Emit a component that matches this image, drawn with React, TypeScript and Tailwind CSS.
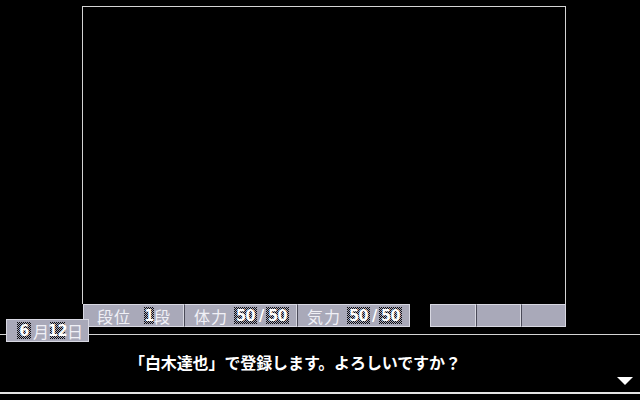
const digits = "font-['DejaVu_Sans_Condensed','Liberation_Sans_Narrow','Liberation_Sans',sans-serif]";

function Checker() {
  return (
    <svg className="absolute inset-0 h-full w-full" shapeRendering="crispEdges" aria-hidden>
      <defs>
        <pattern id="chk" width="2" height="2" patternUnits="userSpaceOnUse">
          <rect width="2" height="2" fill="#a9a9b9" />
          <rect width="1" height="1" fill="#0c0c10" />
          <rect x="1" y="1" width="1" height="1" fill="#0c0c10" />
        </pattern>
      </defs>
      <rect width="100%" height="100%" fill="url(#chk)" />
    </svg>
  );
}

function Num({ children, w }: { children: string; w: string }) {
  return (
    <span
      className={`${digits} ${w} relative inline-flex h-[17px] items-center justify-center text-[16px] font-bold leading-none tracking-[-0.5px] text-white`}
    >
      <Checker />
      <span className="relative">{children}</span>
    </span>
  );
}

function Cell({ w, children, dark }: { w: string; children?: React.ReactNode; dark?: boolean }) {
  return (
    <div
      className={`${w} flex h-full items-center border border-[#d8d8e2] bg-[#a9a9b9] text-[16px] leading-none text-[#f0f0f6] ${
        dark ? 'border-l-[#4a4a58]' : ''
      }`}
    >
      {children}
    </div>
  );
}

function Gauge() {
  return (
    <span className="ml-[6px] flex items-center">
      <Num w="w-[23px]">50</Num>
      <span className={`${digits} w-[9px] text-center text-[16px] font-bold text-white`}>/</span>
      <Num w="w-[23px]">50</Num>
    </span>
  );
}

export default function App() {
  const jp = "font-['Noto_Sans_CJK_JP','Noto_Sans',sans-serif]";
  return (
    <div className={`flex h-[400px] w-[640px] flex-col overflow-hidden bg-black ${jp}`}>
      {/* main view frame */}
      <div className="ml-[82px] mt-[6px] h-[298px] w-[484px] border border-b-0 border-[#d4d4d4]" />

      {/* status bar */}
      <div className="ml-[83px] flex h-[23px]">
        <Cell w="w-[101px]">
          <span className="ml-[13px] tracking-[1px]">段位</span>
          <span className="ml-[13px] flex items-center">
            <Num w="w-[10px]">1</Num>
            <span>段</span>
          </span>
        </Cell>
        <Cell w="w-[113px]" dark>
          <span className="ml-[9px] tracking-[1px]">体力</span>
          <Gauge />
        </Cell>
        <Cell w="w-[113px]" dark>
          <span className="ml-[9px] tracking-[1px]">気力</span>
          <Gauge />
        </Cell>
        <div className="w-[20px]" />
        <Cell w="w-[46px]" />
        <Cell w="w-[45px]" dark />
        <Cell w="w-[45px]" dark />
      </div>

      {/* date tab + separator line */}
      <div className="relative z-10 -mt-[8px] flex items-start">
        <div className="h-[16px] w-[6px] border-b border-[#d4d4d4]" />
        <div className="flex h-[23px] w-[83px] items-center border border-[#d8d8e2] bg-[#a9a9b9] text-[16px] leading-none text-[#f0f0f6]">
          <span className="ml-[10px] flex">
            <Num w="w-[14px]">6</Num>
          </span>
          <span className="ml-[2px]">月</span>
          <span className="ml-[1px] flex">
            <Num w="w-[15px]">12</Num>
          </span>
          <span className="ml-[2px]">日</span>
        </div>
        <div className="h-[16px] flex-1 border-b border-[#d4d4d4]" />
      </div>

      {/* message */}
      <div className="mt-[10px] pl-[129px] text-[16px] font-bold leading-[21px] tracking-[-0.1px] text-white">
        「白木達也」で登録します。よろしいですか？
      </div>

      <div className="flex h-[19px] justify-end pr-[7px] pt-[4px]">
        <svg width="16" height="8" viewBox="0 0 16 8">
          <polygon points="0,0 16,0 8,8" fill="#ffffff" />
        </svg>
      </div>

      <div className="h-[2px] w-full bg-[#e4e4e4]" />
    </div>
  );
}
